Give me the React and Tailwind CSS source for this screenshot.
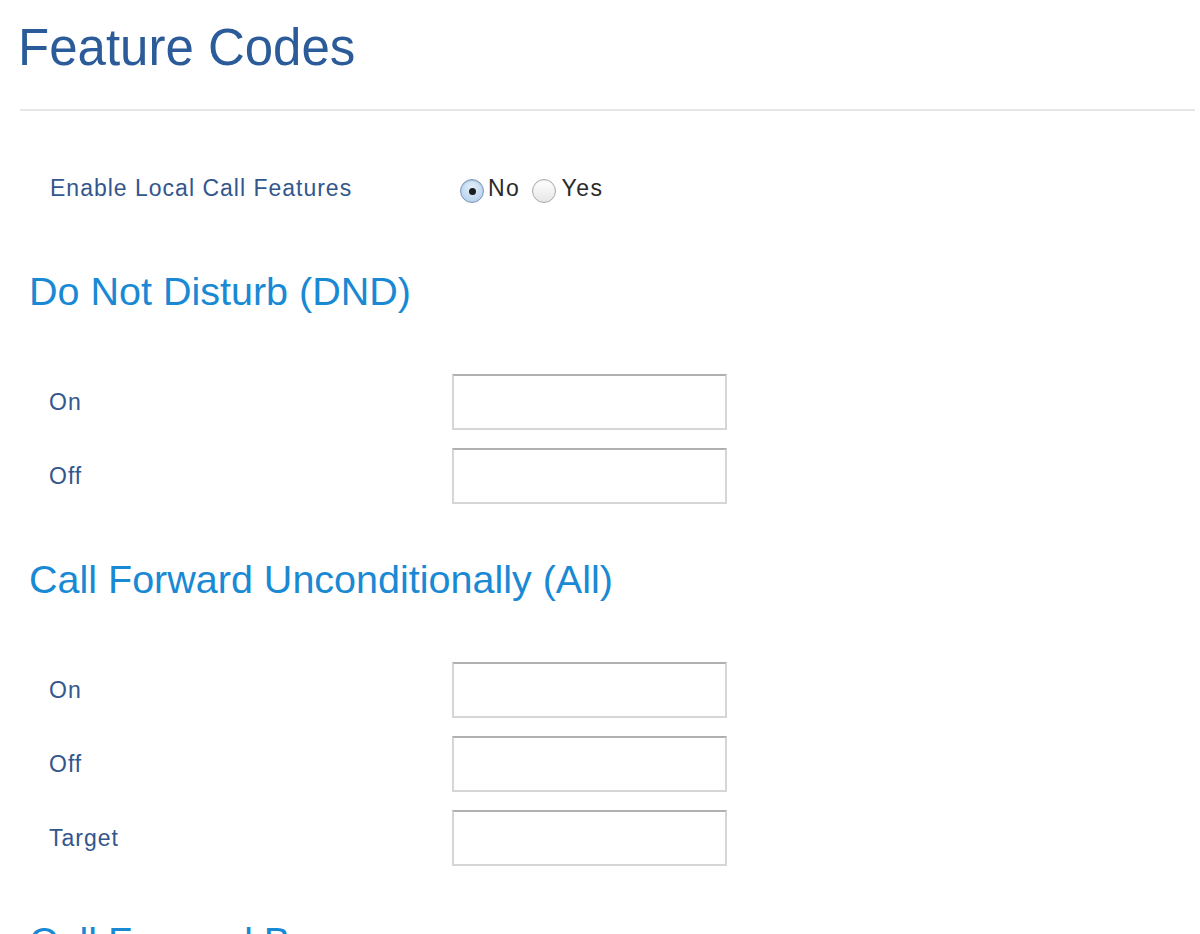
const font = { fontFamily: '"Liberation Sans", Arial, Helvetica, sans-serif' };

function Radio({ checked }) {
  if (checked) {
    return (
      <span className="flex h-[24px] w-[24px] items-center justify-center rounded-full border border-[#7d97b8] bg-[radial-gradient(circle_at_50%_35%,#e4f0fb,#a9c9ea)] shadow-[inset_0_1px_1px_rgba(0,0,0,0.15)]">
        <span className="h-[7px] w-[7px] rounded-full bg-[#1c1c1c]" />
      </span>
    );
  }
  return (
    <span className="block h-[24px] w-[24px] rounded-full border border-[#ababab] bg-[linear-gradient(#ffffff,#e6e6e6)] shadow-[inset_0_1px_1px_rgba(0,0,0,0.08)]" />
  );
}

function Field({ label }) {
  return (
    <div className="flex items-center">
      <div className="w-[403px] text-[23px] leading-[22px] tracking-[1px] text-[#33568d]">{label}</div>
      <input
        type="text"
        className="h-[56px] w-[275px] border-2 border-[#d6d6d6] border-t-[#b0b0b0] bg-white outline-none"
      />
    </div>
  );
}

function Section({ title, fields }) {
  return (
    <section>
      <h2 className="ml-[9px] text-[39.5px] leading-[40px] font-normal text-[#1a89d4]">{title}</h2>
      <div className="mt-[63px] ml-[29px] flex flex-col gap-[18px]">
        {fields.map((f) => (
          <Field key={f} label={f} />
        ))}
      </div>
    </section>
  );
}

export default function App() {
  return (
    <div className="min-h-[934px] bg-white pl-[20px] pr-[5px]" style={font}>
      <h1 className="-ml-[2px] pt-[23px] text-[51px] leading-[50px] font-normal text-[#2b5b98]">Feature Codes</h1>
      <div className="mt-[36px] border-t-2 border-[#e6e6e6]" />

      {/* enable toggle */}
      <div className="mt-[66px] ml-[30px] flex items-start">
        <div className="w-[410px] text-[23px] leading-[22px] tracking-[1px] text-[#33568d]">
          Enable Local Call Features
        </div>
        <div className="flex items-start">
          <span className="mt-[2px]">
            <Radio checked />
          </span>
          <span className="ml-[4px] text-[23px] leading-[22px] tracking-[1.5px] text-[#2a2a2a]">No</span>
          <span className="mt-[2px] ml-[12px]">
            <Radio />
          </span>
          <span className="ml-[5px] text-[23px] leading-[22px] tracking-[1.5px] text-[#2a2a2a]">Yes</span>
        </div>
      </div>

      <div className="mt-[68px] flex flex-col gap-[55px] pb-[60px]">
        <Section title="Do Not Disturb (DND)" fields={['On', 'Off']} />
        <Section title="Call Forward Unconditionally (All)" fields={['On', 'Off', 'Target']} />
        <Section title="Call Forward Busy" fields={['On', 'Off', 'Target']} />
      </div>
    </div>
  );
}
